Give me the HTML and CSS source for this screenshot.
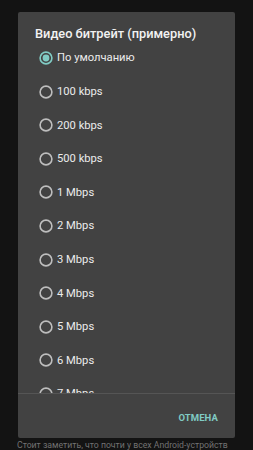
FILE: index.html
```html
<!DOCTYPE html>
<html lang="ru">
<head>
<meta charset="utf-8">
<title>Видео битрейт</title>
<link rel="stylesheet" href="styles.css">
</head>
<body>
<div class="page">
  <div class="dialog">
    <div class="title">Видео битрейт (примерно)</div>
    <div class="list">
      <div class="row selected"><svg class="radio" viewBox="0 0 14 14"><circle cx="7" cy="7" r="5.9" class="ring"/><circle cx="7" cy="7" r="3.4" class="dot"/></svg><span>По умолчанию</span></div>
      <div class="row"><svg class="radio" viewBox="0 0 14 14"><circle cx="7" cy="7" r="5.9" class="ring"/></svg><span>100 kbps</span></div>
      <div class="row"><svg class="radio" viewBox="0 0 14 14"><circle cx="7" cy="7" r="5.9" class="ring"/></svg><span>200 kbps</span></div>
      <div class="row"><svg class="radio" viewBox="0 0 14 14"><circle cx="7" cy="7" r="5.9" class="ring"/></svg><span>500 kbps</span></div>
      <div class="row"><svg class="radio" viewBox="0 0 14 14"><circle cx="7" cy="7" r="5.9" class="ring"/></svg><span>1 Mbps</span></div>
      <div class="row"><svg class="radio" viewBox="0 0 14 14"><circle cx="7" cy="7" r="5.9" class="ring"/></svg><span>2 Mbps</span></div>
      <div class="row"><svg class="radio" viewBox="0 0 14 14"><circle cx="7" cy="7" r="5.9" class="ring"/></svg><span>3 Mbps</span></div>
      <div class="row"><svg class="radio" viewBox="0 0 14 14"><circle cx="7" cy="7" r="5.9" class="ring"/></svg><span>4 Mbps</span></div>
      <div class="row"><svg class="radio" viewBox="0 0 14 14"><circle cx="7" cy="7" r="5.9" class="ring"/></svg><span>5 Mbps</span></div>
      <div class="row"><svg class="radio" viewBox="0 0 14 14"><circle cx="7" cy="7" r="5.9" class="ring"/></svg><span>6 Mbps</span></div>
      <div class="row"><svg class="radio" viewBox="0 0 14 14"><circle cx="7" cy="7" r="5.9" class="ring"/></svg><span>7 Mbps</span></div>
    </div>
    <div class="actions">
      <span class="btn">ОТМЕНА</span>
    </div>
  </div>
  <p class="behind">Стоит заметить, что почти у всех Android-устройств</p>
</div>
</body>
</html>
```

FILE: styles.css
```css
html, body {
  margin: 0;
  padding: 0;
}
body {
  background: #131313;
  width: 253px;
  height: 450px;
  overflow: hidden;
  font-family: Roboto, "Noto Sans", sans-serif;
}
.page {
  display: flex;
  flex-direction: column;
  padding-top: 12px;
}
.dialog {
  margin: 0 18px;
  height: 426px;
  background: #424242;
  border-radius: 2px;
  display: flex;
  flex-direction: column;
  overflow: hidden;
}
.title {
  padding: 14px 17px 0;
  height: 15px;
  line-height: 15px;
  font-size: 12.8px;
  font-weight: 500;
  color: #f2f2f2;
  flex: 0 0 auto;
  margin-bottom: 0.2px;
}
.list {
  flex: 1 1 auto;
  overflow: hidden;
  border-bottom: 1px solid #555555;
}
.row {
  height: 33.6px;
  display: flex;
  align-items: center;
  padding-left: 21px;
  font-size: 11.2px;
  color: #ececec;
}
.radio {
  width: 14px;
  height: 14px;
  margin-right: 4px;
  flex: 0 0 auto;
}
.ring {
  fill: none;
  stroke: #bdbdbd;
  stroke-width: 1.6;
}
.selected .ring {
  stroke: #80cbc4;
}
.dot {
  fill: #80cbc4;
}
.actions {
  flex: 0 0 44px;
  display: flex;
  align-items: center;
  justify-content: flex-end;
  padding-right: 17px;
  padding-top: 2px;
  box-sizing: border-box;
}
.btn {
  font-size: 9.5px;
  font-weight: 700;
  color: #80cbc4;
  letter-spacing: 0.1px;
}
.behind {
  margin: 1px 0 0 17px;
  font-size: 8.7px;
  line-height: 12px;
  color: #727272;
  white-space: nowrap;
}
```
